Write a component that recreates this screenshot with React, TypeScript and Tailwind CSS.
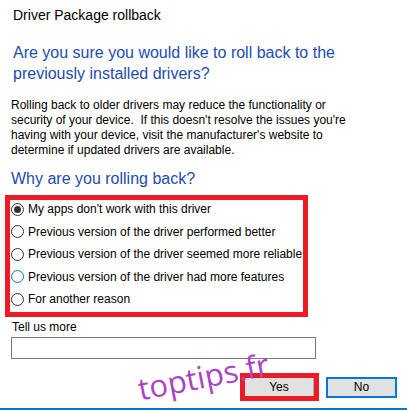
import React, { useState } from "react";

const reasons = [
  "My apps don't work with this driver",
  "Previous version of the driver performed better",
  "Previous version of the driver seemed more reliable",
  "Previous version of the driver had more features",
  "For another reason",
];

const Radio: React.FC<{ checked: boolean; focused?: boolean }> = ({ checked, focused }) => (
  <span
    className={`w-[13px] h-[13px] rounded-full border bg-white flex items-center justify-center shrink-0 ${
      focused ? "border-[#0078d7]" : "border-[#333333]"
    }`}
  >
    {checked && <span className="w-[7px] h-[7px] rounded-full bg-[#333333]" />}
  </span>
);

export default function App() {
  const [selected, setSelected] = useState(0);

  return (
    <div
      className="relative w-[407px] h-[411px] bg-white overflow-hidden text-black"
      style={{ fontFamily: '"Liberation Sans", Arial, sans-serif' }}
    >
      <div className="pt-[6px] pl-[13px] text-[14px] leading-[18px]">Driver Package rollback</div>

      <div className="mt-[18px] pl-[13px] pr-[40px] text-[16px] leading-[21px] text-[#1d4cb0]">
        Are you sure you would like to roll back to the previously installed drivers?
      </div>

      <p className="mt-[14px] pl-[11px] pr-[50px] text-[12px] leading-[15px]">
        Rolling back to older drivers may reduce the functionality or security of your device.&nbsp; If this
        doesn't resolve the issues you're having with your device, visit the manufacturer's website to
        determine if updated drivers are available.
      </p>

      <div className="mt-[10px] pl-[11px] text-[16px] leading-[21px] text-[#1d4cb0]">Why are you rolling back?</div>

      <div className="mt-[6px] ml-[5px] w-[303px] border-[5px] border-[#ed1c24] pl-[1px] pb-[4px] flex flex-col gap-[4.5px]">
        {reasons.map((r, i) => (
          <label
            key={r}
            className="h-[18px] flex items-center gap-[4px] text-[12px] cursor-default"
            onClick={() => setSelected(i)}
          >
            <Radio checked={selected === i} focused={i === 3} />
            <span>{r}</span>
          </label>
        ))}
      </div>

      <div className="mt-[2px] pl-[12px] text-[12px] leading-[16px]">Tell us more</div>
      <input
        className="block mt-[2px] ml-[11px] w-[305px] h-[22px] border border-[#7a7a7a] outline-none px-1 text-[12px]"
        type="text"
      />

      <div className="mt-[14px] pr-[10px] flex justify-end items-center gap-[7px]">
        <div className="w-[79px] h-[28px] border-[5px] border-[#ed1c24]">
          <button className="w-full h-full bg-[#e1e1e1] border-r border-[#adadad] text-[12px] flex items-center justify-center">
            Yes
          </button>
        </div>
        <button className="w-[71px] h-[21px] bg-[#e1e1e1] border-2 border-[#0078d7] text-[12px] flex items-center justify-center">
          No
        </button>
      </div>

      <div className="mt-[7px] h-[2px] bg-[#0078d7]" />

      <div
        className="absolute left-[137px] top-[358px] text-[31px] leading-[36px] text-[#a745c4] -rotate-[11deg] origin-center pointer-events-none"
        style={{ fontFamily: '"Open Sans", "Liberation Sans", sans-serif' }}
      >
        toptips.fr
      </div>
    </div>
  );
}
